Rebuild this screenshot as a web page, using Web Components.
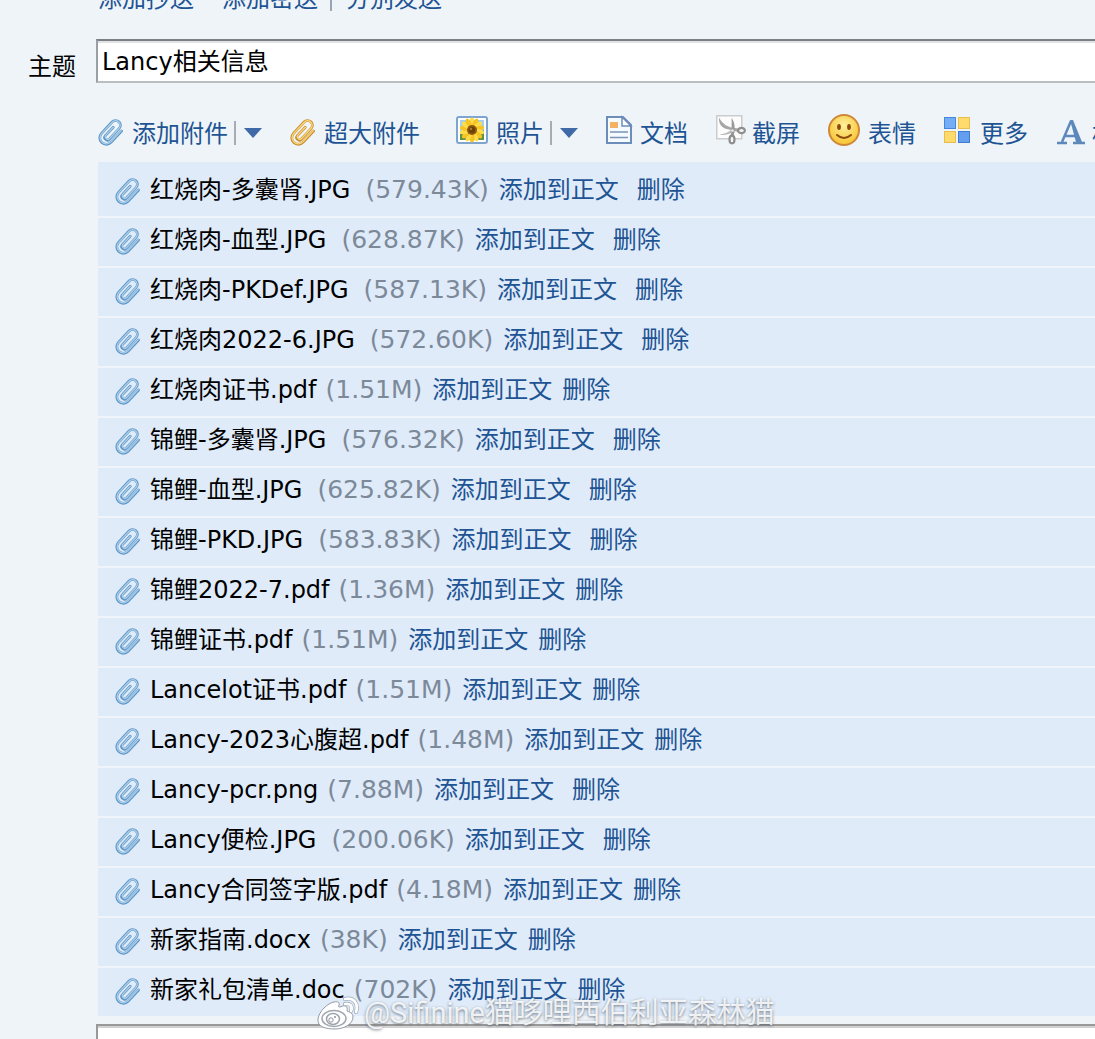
<!DOCTYPE html>
<html lang="zh-CN">
<head>
<meta charset="UTF-8">
<meta name="viewport" content="width=device-width, initial-scale=1.0">
<title>写信</title>
<style>
  html, body {
    margin: 0;
    height: 100%;
    overflow: hidden;
  }
  body {
    background: #eff4f8;
    color: #000;
    font-family: Verdana, "DejaVu Sans", "Noto Sans CJK SC", sans-serif;
    font-size: 24px;
    line-height: 32px;
  }
</style>
</head>
<body>
<mail-compose></mail-compose>

<script>
const clipPaths = `
  <g transform="translate(13 14) rotate(43)" fill="none" stroke-linecap="round">
    <path stroke="var(--clip-dark)" stroke-width="2.8" d="M7 -8V7.500a6.500 6.500 0 0 1 -13 0V-8a4.800 4.800 0 0 1 9.600 0V6.500a2.600 2.600 0 0 1 -5.200 0V-5"/>
    <path stroke="var(--clip-light)" stroke-width="1.3" d="M6.600 -8V7.300a6.200 6.200 0 0 1 -12.400 0V-8a4.600 4.600 0 0 1 9.200 0V6.300a2.600 2.600 0 0 1 -5 0V-5"/>
  </g>`;

const petals = Array.from({ length: 14 }, (_, i) =>
  `<ellipse cx="16" cy="6.500" rx="2.400" ry="5" fill="${i % 2 ? '#f6c521' : '#ffdc4b'}" transform="rotate(${i * 360 / 14} 16 14)"/>`
).join('');

const icons = {
  clip: { w: 26, h: 28, body: clipPaths },
  photo: { w: 32, h: 28, body: `
    <rect x="1" y="1" width="30" height="26" rx="2" fill="#fff" stroke="#7ea5d2" stroke-width="2"/>
    <rect x="4" y="4" width="24" height="20" fill="#a3cff0"/>
    <path d="M4 18l6-2 12 1 6-3v10H4z" fill="#599447"/>
    <svg x="4" y="4" width="24" height="20" viewBox="4 4 24 20">${petals}</svg>
    <circle cx="16" cy="14" r="5" fill="#8b5710"/>
    <circle cx="16" cy="14" r="3" fill="#68400d"/>
    <circle cx="15" cy="13" r="1.200" fill="#b17a25"/>` },
  doc: { w: 26, h: 28, body: `
    <path d="M1 1h16l8 8v18H1z" fill="#f5faff" stroke="#6c8db9" stroke-width="2"/>
    <path d="M16 1v9h9z" fill="#fff" stroke="#6c8db9" stroke-width="1.500"/>
    <rect x="4" y="6" width="8" height="6" fill="#f3b263"/>
    <path d="M4 16h18M4 21.500h18" stroke="#7b93b5" stroke-width="1.600"/>` },
  shot: { w: 28, h: 30, body: `
    <rect x=".75" y=".75" width="25" height="23" fill="#fcfcfc" stroke="#ccc" stroke-width="1.500"/>
    <path d="M3 2.500c-.5 7 3 11 10 12l9 2.500v-3.500l-7-1C10 11 6 8 3 2.500z" fill="#a6a6a6"/>
    <path d="M15.500 3c3 4 3.500 8 3 14l-1 5h-3c1-7 1.500-12 1-19z" fill="#999"/>
    <path d="M3 19.500c5 1 9 0 13-2l-1-2.500c-4 3-7 4-12 4.500z" fill="#b8b8b8"/>
    <ellipse cx="25.500" cy="15.500" rx="3.400" ry="2.600" fill="#f4f4f4" stroke="#8e8e8e" stroke-width="2.200"/>
    <ellipse cx="16" cy="24.500" rx="2.500" ry="3.800" fill="#f4f4f4" stroke="#8e8e8e" stroke-width="2.200"/>
    <circle cx="16.500" cy="15.500" r="1.200" fill="#eee"/>` },
  smile: { w: 32, h: 32, body: `
    <defs><radialGradient id="face" cx=".5" cy=".35" r=".65"><stop offset="0" stop-color="#fff09a"/><stop offset="1" stop-color="#f8c331"/></radialGradient></defs>
    <circle cx="16" cy="16" r="15" fill="url(#face)" stroke="#ce8838" stroke-width="2"/>
    <ellipse cx="11" cy="13" rx="1.900" ry="3" fill="#8c4a10"/>
    <ellipse cx="21" cy="13" rx="1.900" ry="3" fill="#8c4a10"/>
    <path d="M9 21q7 6 14 0" fill="none" stroke="#8c4a10" stroke-width="2" stroke-linecap="round"/>` },
  more: { w: 28, h: 28, body: `
    <g stroke-width="1">
      <rect x=".5" y="1.500" width="11" height="11" fill="#72adf5" stroke="#4786d9"/>
      <rect x="14.500" y="1.500" width="11" height="11" fill="#ffda6c" stroke="#e9bd4e"/>
      <rect x=".5" y="15.500" width="11" height="11" fill="#ffda6c" stroke="#e9bd4e"/>
      <rect x="14.500" y="15.500" width="11" height="11" fill="#639fee" stroke="#3f7ccd"/>
    </g>` },
  format: { w: 28, h: 28, body: `
    <path d="M6 26L15 5M9 20h12" fill="none" stroke="#5c88bc" stroke-width="2.500"/>
    <path d="M14 4h3l9 22h-6z" fill="#5c88bc"/>
    <path d="M1 27h10M17 27h12" stroke="#5c88bc" stroke-width="2.500"/>` }
};

class MailIcon extends HTMLElement {
  constructor() {
    super();
    this.attachShadow({ mode: 'open' });
  }
  connectedCallback() {
    const icon = icons[this.getAttribute('name')];
    this.shadowRoot.innerHTML = `
      <style>
        :host {
          display: block;
          flex: none;
          --clip-dark: #6297c6;
          --clip-light: #a9cfec;
        }
        :host([tone="gold"]) {
          --clip-dark: #c98f35;
          --clip-light: #ffd876;
        }
        svg {
          display: block;
          overflow: visible;
        }
      </style>
      <svg width="${icon.w}" height="${icon.h}" viewBox="0 0 ${icon.w} ${icon.h}" aria-hidden="true">${icon.body}</svg>`;
  }
}

class ToolButton extends HTMLElement {
  constructor() {
    super();
    this.attachShadow({ mode: 'open' });
  }
  connectedCallback() {
    const menu = this.hasAttribute('menu')
      ? '<button class="arrow" aria-label="展开菜单"><i></i></button>'
      : '';
    this.shadowRoot.innerHTML = `
      <style>
        :host {
          display: flex;
          flex: none;
          align-items: center;
          color: #1e5494;
        }
        :host([wide]) { margin-right: 8px; }
        button {
          display: flex;
          align-items: center;
          gap: 8px;
          padding: 0;
          border: 0;
          background: none;
          color: inherit;
          font: inherit;
          white-space: nowrap;
          cursor: pointer;
        }
        .label { padding-top: 8px; }
        mail-icon[name="clip"] { padding-top: 4px; }
        .arrow {
          margin: 6px 0 0 6px;
          padding-left: 8px;
          height: 24px;
          border-left: 2px solid #a5acb4;
        }
        .arrow i {
          border: 9px solid transparent;
          border-top: 10px solid #3f69a7;
          border-bottom: 0;
        }
      </style>
      <button>
        <mail-icon name="${this.getAttribute('icon')}" tone="${this.getAttribute('tone') || ''}"></mail-icon>
        <span class="label"><slot></slot></span>
      </button>${menu}`;
  }
}

class AttachmentItem extends HTMLElement {
  constructor() {
    super();
    this.attachShadow({ mode: 'open' });
    this.shadowRoot.innerHTML = `
      <style>
        :host {
          display: flex;
          align-items: center;
          height: 48px;
          padding-left: 17px;
          border-bottom: 2px solid #eff5fb;
          white-space: nowrap;
          --name-gap: 9px;
          --link-gap: 10px;
        }
        :host([kind="jpg"]) {
          --name-gap: 15px;
          --link-gap: 18px;
        }
        :host([kind="png"]) { --link-gap: 18px; }
        :host(:last-child) { border-bottom: 0; }
        mail-icon {
          margin-right: 9px;
          padding-bottom: 2px;
        }
        .name, .size, a { padding-bottom: 4px; }
        .size {
          margin: 0 10px 0 var(--name-gap);
          color: #7c8999;
          font-size: 25px;
        }
        a {
          color: #1e5494;
          text-decoration: none;
        }
        a + a { margin-left: var(--link-gap); }
      </style>
      <mail-icon name="clip"></mail-icon>
      <span class="name"><slot></slot></span>
      <span class="size"><slot name="size"></slot></span>
      <a href="#insert">添加到正文</a>
      <a href="#delete">删除</a>`;
  }
}

class WeiboMark extends HTMLElement {
  constructor() {
    super();
    this.attachShadow({ mode: 'open' });
    this.shadowRoot.innerHTML = `
      <style>
        :host {
          position: absolute;
          left: 317px;
          bottom: 8px;
          display: flex;
          align-items: center;
          gap: 4px;
          color: rgba(255, 255, 255, .85);
          font-family: Roboto, "Noto Sans CJK SC", sans-serif;
          font-size: 29px;
          line-height: 36px;
          text-shadow: 0 1px 3px rgba(70, 80, 95, .75);
          white-space: nowrap;
          pointer-events: none;
        }
        svg { display: block; }
      </style>
      <svg width="43" height="36" viewBox="0 0 43 36" fill="none">
        <path d="M17 7c-6 1-15 9-16 17s8 10 17 10 18-5 18-12c0-4-4-5-6-6 1-4-1-7-7-4-1 0-2 0-1-2s-1-4-5-3z" fill="#fff" stroke="#929aa4"/>
        <ellipse cx="17" cy="23.500" rx="12" ry="8" fill="#fff" stroke="#a1a7b0" stroke-width="1.500"/>
        <ellipse cx="16" cy="24" rx="6.500" ry="5.500" stroke="#9ba2ab" stroke-width="1.500"/>
        <circle cx="14" cy="25" r="2.200" stroke="#8b929c"/>
        <circle cx="18" cy="22" r="1" fill="#8b929c"/>
        <path d="M28 4c8-2 14 4 11 13M28 9c5-1 8 2 6 7" stroke="#9ba4b0" stroke-width="4" stroke-linecap="round"/>
        <path d="M28 4c8-2 14 4 11 13M28 9c5-1 8 2 6 7" stroke="#fff" stroke-width="2.800" stroke-linecap="round"/>
      </svg>
      <span><slot></slot></span>`;
  }
}

const files = [
  ['红烧肉-多囊肾.JPG', '579.43K'],
  ['红烧肉-血型.JPG', '628.87K'],
  ['红烧肉-PKDef.JPG', '587.13K'],
  ['红烧肉2022-6.JPG', '572.60K'],
  ['红烧肉证书.pdf', '1.51M'],
  ['锦鲤-多囊肾.JPG', '576.32K'],
  ['锦鲤-血型.JPG', '625.82K'],
  ['锦鲤-PKD.JPG', '583.83K'],
  ['锦鲤2022-7.pdf', '1.36M'],
  ['锦鲤证书.pdf', '1.51M'],
  ['Lancelot证书.pdf', '1.51M'],
  ['Lancy-2023心腹超.pdf', '1.48M'],
  ['Lancy-pcr.png', '7.88M'],
  ['Lancy便检.JPG', '200.06K'],
  ['Lancy合同签字版.pdf', '4.18M'],
  ['新家指南.docx', '38K'],
  ['新家礼包清单.doc', '702K']
];

class MailCompose extends HTMLElement {
  constructor() {
    super();
    this.attachShadow({ mode: 'open' });
    const rows = files.map(([name, size]) => `
      <attachment-item kind="${name.split('.').pop().toLowerCase()}">${name}<span slot="size">(${size})</span></attachment-item>`).join('');

    this.shadowRoot.innerHTML = `
      <style>
        :host {
          display: flex;
          flex-direction: column;
          height: 100%;
          position: relative;
          overflow: hidden;
        }
        .recipients {
          display: flex;
          align-items: flex-end;
          flex: none;
          height: 15px;
          padding-left: 98px;
          overflow: hidden;
          white-space: nowrap;
        }
        .recipients a {
          color: #1e5494;
          text-decoration: none;
        }
        .recipients a + a { margin-left: 28px; }
        .recipients i {
          height: 11px;
          margin: 0 14px 4px 12px;
          border-left: 2px solid #9aa5b3;
        }
        .subject {
          display: grid;
          grid-template-columns: 96px 1fr;
          align-items: center;
          flex: none;
          margin-top: 24px;
        }
        label {
          padding: 12px 0 0 28px;
        }
        input {
          box-sizing: border-box;
          width: 100%;
          height: 44px;
          padding: 0 4px 4px;
          border: 2px solid #999fa5;
          border-top-color: #7b8086;
          border-bottom-color: #babec2;
          border-right: 0;
          border-radius: 0;
          background: #fff;
          box-shadow: inset 0 2px #e2e2e2;
          color: #000;
          font: inherit;
          outline: none;
        }
        .tools {
          display: flex;
          align-items: center;
          gap: 28px;
          flex: none;
          height: 40px;
          margin: 27px 0 12px 98px;
          overflow: hidden;
        }
        .files {
          flex: none;
          margin-left: 98px;
          padding-top: 6px;
          background: #dfebf9;
        }
        textarea {
          display: block;
          box-sizing: border-box;
          flex: 1;
          min-height: 80px;
          margin: 8px 0 0 96px;
          padding: 8px;
          border: 2px solid #999;
          border-right: 0;
          border-radius: 0;
          background: #fff;
          box-shadow: inset 0 2px #d2d2d2;
          font: inherit;
          resize: none;
          outline: none;
        }
      </style>
      <nav class="recipients">
        <a href="#cc">添加抄送</a>
        <a href="#bcc">添加密送</a>
        <i></i>
        <a href="#separate">分别发送</a>
      </nav>
      <div class="subject">
        <label for="subject">主题</label>
        <input id="subject" type="text" value="Lancy相关信息">
      </div>
      <div class="tools">
        <tool-button icon="clip" menu>添加附件</tool-button>
        <tool-button icon="clip" tone="gold" wide>超大附件</tool-button>
        <tool-button icon="photo" menu>照片</tool-button>
        <tool-button icon="doc">文档</tool-button>
        <tool-button icon="shot">截屏</tool-button>
        <tool-button icon="smile">表情</tool-button>
        <tool-button icon="more">更多</tool-button>
        <tool-button icon="format">格式</tool-button>
      </div>
      <div class="files">${rows}</div>
      <textarea aria-label="正文"></textarea>
      <weibo-mark>@Sifinine猫哆哩西伯利亚森林猫</weibo-mark>`;
  }
}

customElements.define('mail-icon', MailIcon);
customElements.define('tool-button', ToolButton);
customElements.define('attachment-item', AttachmentItem);
customElements.define('weibo-mark', WeiboMark);
customElements.define('mail-compose', MailCompose);
</script>
</body>
</html>
